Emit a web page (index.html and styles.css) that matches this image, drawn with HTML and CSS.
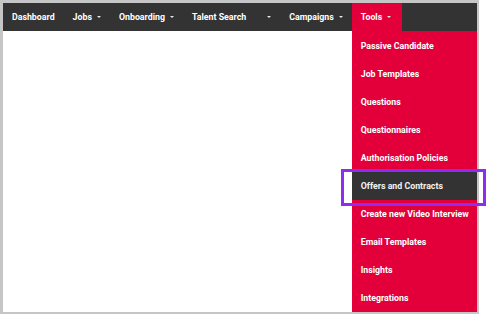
FILE: index.html
```html
<!DOCTYPE html>
<html lang="en">
<head>
    <meta charset="UTF-8">
    <title>Tools menu</title>
    <link rel="stylesheet" href="styles.css">
</head>
<body>
<div class="screen">
    <nav class="navbar">
        <a class="nav-item">Dashboard</a>
        <a class="nav-item">Jobs<span class="caret"></span></a>
        <a class="nav-item">Onboarding<span class="caret"></span></a>
        <a class="nav-item">Talent Search<span class="caret wide"></span></a>
        <a class="nav-item">Campaigns<span class="caret"></span></a>
        <div class="nav-item open">
            <span>Tools</span><span class="caret"></span>
            <ul class="dropdown">
                <li>Passive Candidate</li>
                <li>Job Templates</li>
                <li>Questions</li>
                <li>Questionnaires</li>
                <li>Authorisation Policies</li>
                <li class="active">Offers and Contracts</li>
                <li>Create new Video Interview</li>
                <li>Email Templates</li>
                <li>Insights</li>
                <li>Integrations</li>
            </ul>
        </div>
    </nav>
    <div class="content"></div>
</div>
</body>
</html>
```

FILE: styles.css
```css
:root {
    --red: #e3003a;
    --dark: #333333;
    --frame: #c6c6c6;
    --mark: #8e2cf2;
}

body {
    margin: 0;
    background: white;
    font-family: Roboto, "Liberation Sans", sans-serif;
}

.screen {
    width: 474px;
    height: 309px;
    border-style: solid;
    border-color: var(--frame);
    border-width: 3px 2px 2px 3px;
    display: flex;
    flex-direction: column;
}

.navbar {
    height: 28px;
    background: var(--dark);
    display: flex;
}

.nav-item {
    display: flex;
    align-items: center;
    padding: 0 9px;
    color: white;
    font-size: 8.8px;
    font-weight: bold;
    white-space: nowrap;
}

.caret {
    display: inline-block;
    width: 0;
    height: 0;
    margin-left: 5px;
    border-top: 2.5px solid #e8e8e8;
    border-left: 2px solid transparent;
    border-right: 2px solid transparent;
}

.caret.wide {
    margin-left: 21px;
}

.nav-item.open {
    position: relative;
    background: var(--red);
    padding: 0 11px 0 9px;
}

.dropdown {
    position: absolute;
    top: 28px;
    left: 0;
    width: 125px;
    margin: 0;
    padding: 1px 0 0;
    list-style: none;
    background: var(--red);
}

.dropdown li {
    position: relative;
    height: 28px;
    display: flex;
    align-items: center;
    padding-left: 9px;
}

.dropdown li.active {
    background: var(--dark);
    color: #f2f2f2;
}

.dropdown li.active::after {
    content: "";
    position: absolute;
    top: -3px;
    bottom: -6px;
    left: -11px;
    right: -9px;
    border: 3px solid var(--mark);
}

.content {
    flex: 1;
    background: white;
}
```
